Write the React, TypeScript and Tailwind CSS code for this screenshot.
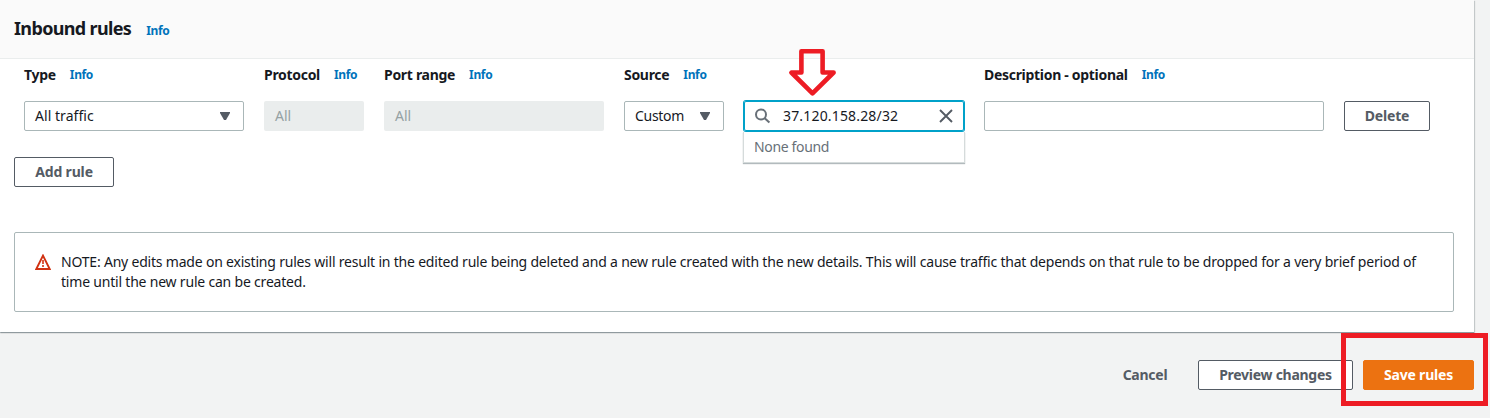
import React from "react";

function Info({ className = "" }: { className?: string }) {
  return (
    <a className={`text-[12px] font-bold leading-5 tracking-[-0.35px] text-[#0073bb] ${className}`}>Info</a>
  );
}

function Label({ text }: { text: string }) {
  return (
    <div className="flex h-5 items-center gap-[14px] whitespace-nowrap">
      <span className="-mt-px text-[14px] font-bold leading-5 tracking-[-0.3px]">{text}</span>
      <Info />
    </div>
  );
}

function Caret() {
  return (
    <svg width="12" height="10" viewBox="0 0 12 10" className="shrink-0">
      <path d="M1 1H11V2L7 9H5L1 2Z" fill="#545b64" />
    </svg>
  );
}

function Field({ children, className = "" }: { children?: React.ReactNode; className?: string }) {
  return (
    <div className={`flex h-[30px] items-center rounded-[2px] text-[14px] leading-5 whitespace-nowrap ${className}`}>
      {children}
    </div>
  );
}

function Button({ children, className = "" }: { children: React.ReactNode; className?: string }) {
  return (
    <button
      className={`flex h-[30px] shrink-0 items-center justify-center rounded-[2px] border text-[14px] font-bold leading-5 whitespace-nowrap ${className}`}
    >
      {children}
    </button>
  );
}

export default function App() {
  return (
    <div className="relative h-[418px] w-[1490px] overflow-hidden bg-[#f2f3f3] font-['Noto_Sans',sans-serif] text-[#16191f]">
      <section className="h-[332px] w-[1474px] bg-white shadow-[0_1px_1px_0_rgba(0,28,36,0.3),1px_1px_1px_0_rgba(0,28,36,0.15)]">
        <header className="flex h-[59px] items-center gap-[15px] border-b border-[#eaeded] bg-[#fafafa] pl-[14px]">
          <h2 className="-mt-[2px] text-[18px] font-bold leading-[22px] tracking-[-0.65px]">Inbound rules</h2>
          <Info className="pt-[3px]" />
        </header>

        <div className="grid grid-cols-[220px_100px_220px_100px_220px_340px_86px] gap-x-5 pt-[6px] pl-6">
          <Label text="Type" />
          <Label text="Protocol" />
          <Label text="Port range" />
          <Label text="Source" />
          <span />
          <Label text="Description - optional" />
        </div>

        <div className="grid grid-cols-[220px_100px_220px_100px_220px_340px_86px] gap-x-5 pt-4 pl-6">
          <Field className="justify-between border border-[#aab7b8] pr-3 pl-[10px]">
            <span className="tracking-[0.05px]">All traffic</span>
            <Caret />
          </Field>
          <Field className="bg-[#eaeded] pl-[11px] text-[#95a1a3]">All</Field>
          <Field className="bg-[#eaeded] pl-[11px] text-[#95a1a3]">All</Field>
          <Field className="justify-between border border-[#aab7b8] pr-3 pl-[10px]">
            <span className="tracking-[-0.3px]">Custom</span>
            <Caret />
          </Field>
          <div className="relative">
            <Field className="border border-[#00a1c9] pr-[9px] pl-[10px] shadow-[0_0_0_1px_#00a1c9]">
              <svg width="16" height="16" viewBox="0 0 16 16" fill="none" stroke="#687078" strokeWidth="2" className="shrink-0">
                <circle cx="6" cy="6.5" r="5" />
                <path d="M9.7 10.2L14.4 14.6" />
              </svg>
              <span className="ml-[12px] flex-1 tracking-[0.17px]">37.120.158.28/32</span>
              <svg width="16" height="16" viewBox="0 0 16 16" fill="none" stroke="#545b64" strokeWidth="1.9" className="shrink-0">
                <path d="M2 2L14 14M14 2L2 14" />
              </svg>
            </Field>
            <div className="absolute top-[31px] -left-px h-[31px] w-[222px] border border-t-0 border-[#d5dbdb] bg-white pl-[10px] text-[14px] leading-[30px] tracking-[-0.35px] text-[#687078] shadow-[0_1px_1px_0_rgba(0,28,36,0.3)]">
              None found
            </div>
          </div>
          <Field className="border border-[#aab7b8]" />
          <Button className="border-[#545b64] tracking-[-0.2px] text-[#545b64]">Delete</Button>
        </div>

        <div className="pt-[26px] pl-[14px]">
          <Button className="w-[100px] border-[#545b64] tracking-[-0.15px] text-[#545b64]">Add rule</Button>
        </div>

        <div className="mt-[45px] ml-[14px] flex h-20 w-[1440px] rounded-[2px] border border-[#aab7b8] pt-[19px] pl-5">
          <svg width="16" height="16" viewBox="0 0 16 16" fill="none" stroke="#d13212" className="mt-[2px] mr-[10px] shrink-0">
            <path d="M8 1.6L14.7 15H1.3Z" strokeWidth="1.9" />
            <path d="M8 6V10M8 11V13" strokeWidth="1.6" />
          </svg>
          <p className="text-[14px] leading-5 whitespace-nowrap">
            <span className="tracking-[-0.2px]">NOTE: Any edits made on existing rules will result in the edited rule being deleted and a new rule created with the new details. This will cause traffic that depends on that rule to be dropped for a very brief period of</span>
            <br />
            <span className="tracking-[-0.2px]">time until the new rule can be created.</span>
          </p>
        </div>
      </section>

      <footer className="flex justify-end gap-[10px] pt-7 pr-4">
        <Button className="w-[86px] border-transparent tracking-[-0.25px] text-[#545b64]">Cancel</Button>
        <Button className="w-[155px] border-[#545b64] bg-white tracking-[-0.27px] text-[#545b64]">Preview changes</Button>
        <Button className="w-[111px] border-[#ec7211] bg-[#ec7211] tracking-[-0.2px] text-white">Save rules</Button>
      </footer>

      <div className="absolute top-[333px] left-[1341px] h-[73px] w-[147px] border-[5px] border-[#ed1c24]" />
      <svg className="absolute top-[48px] left-[788px]" width="50" height="50" viewBox="788 48 50 50" fill="none" stroke="#ed1c24" strokeWidth="4.6" strokeLinejoin="round">
        <path d="M801.4 51.3H822.6V72.5H833.6L812.5 93.4L791.4 72.5H801.4Z" />
      </svg>
    </div>
  );
}
